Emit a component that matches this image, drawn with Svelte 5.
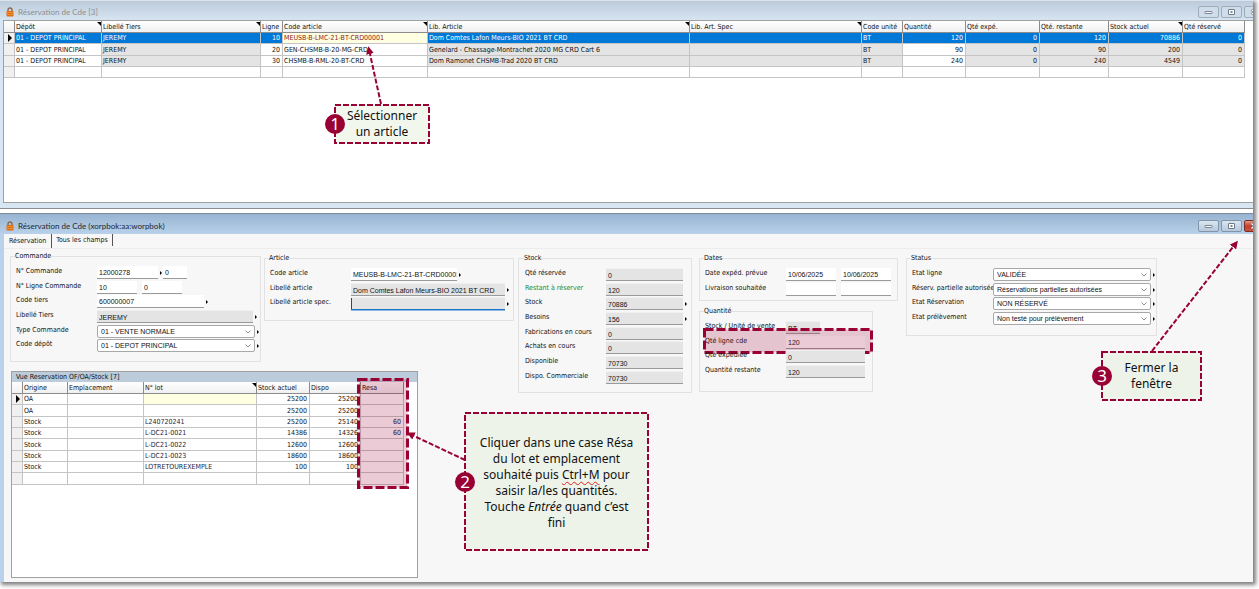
<script>
  const colonnesCde = [
    { nom: 'Dépôt', cle: 'depot', largeur: 87, tri: true },
    { nom: 'Libellé Tiers', cle: 'tiers', largeur: 159, tri: true, gris: true },
    { nom: 'Ligne', cle: 'ligne', largeur: 22, num: true },
    { nom: 'Code article', cle: 'code', largeur: 145, tri: true },
    { nom: 'Lib. Article', cle: 'lib', largeur: 262, tri: true, gris: true },
    { nom: 'Lib. Art. Spec', cle: 'spec', tri: true, gris: true },
    { nom: 'Code unité', cle: 'unite', largeur: 41, gris: true },
    { nom: 'Quantité', cle: 'quantite', largeur: 63, num: true },
    { nom: 'Qté expé.', cle: 'expe', largeur: 74, num: true, gris: true },
    { nom: 'Qté. restante', cle: 'restante', largeur: 69, num: true, gris: true },
    { nom: 'Stock actuel', cle: 'stock', largeur: 74, num: true, tri: true, gris: true },
    { nom: 'Qté réservé', cle: 'reserve', largeur: 62, num: true, gris: true }
  ];

  const lignesCde = [
    { depot: '01 - DEPOT PRINCIPAL', tiers: 'JEREMY', ligne: 10, code: 'MEUSB-B-LMC-21-BT-CRD00001', lib: 'Dom Comtes Lafon Meurs-BIO 2021 BT CRD', unite: 'BT', quantite: 120, expe: 0, restante: 120, stock: 70886, reserve: 0 },
    { depot: '01 - DEPOT PRINCIPAL', tiers: 'JEREMY', ligne: 20, code: 'GEN-CHSMB-B-20-MG-CRD', lib: 'Genelard - Chassage-Montrachet 2020 MG CRD Cart 6', unite: 'BT', quantite: 90, expe: 0, restante: 90, stock: 200, reserve: 0 },
    { depot: '01 - DEPOT PRINCIPAL', tiers: 'JEREMY', ligne: 30, code: 'CHSMB-B-RML-20-BT-CRD', lib: 'Dom Ramonet CHSMB-Trad 2020 BT CRD', unite: 'BT', quantite: 240, expe: 0, restante: 240, stock: 4549, reserve: 0 }
  ];

  const colonnesLot = [
    { nom: 'Origine', cle: 'origine', largeur: 45 },
    { nom: 'Emplacement', cle: 'emplacement', largeur: 76 },
    { nom: 'N° lot', cle: 'lot', largeur: 113, tri: true },
    { nom: 'Stock actuel', cle: 'stock', largeur: 53, num: true },
    { nom: 'Dispo', cle: 'dispo', largeur: 51, num: true },
    { nom: 'Resa', cle: 'resa', largeur: 43, num: true }
  ];

  const lignesLot = [
    { origine: 'OA', stock: 25200, dispo: 25200 },
    { origine: 'OA', stock: 25200, dispo: 25200 },
    { origine: 'Stock', lot: 'L240720241', stock: 25200, dispo: 25140, resa: 60 },
    { origine: 'Stock', lot: 'L-DC21-0021', stock: 14386, dispo: 14326, resa: 60 },
    { origine: 'Stock', lot: 'L-DC21-0022', stock: 12600, dispo: 12600 },
    { origine: 'Stock', lot: 'L-DC21-0023', stock: 18600, dispo: 18600 },
    { origine: 'Stock', lot: 'LOTRETOUREXEMPLE', stock: 100, dispo: 100 }
  ];

  const commande = [
    { nom: 'N° Commande', champs: [{ v: '12000278', l: 61, fleche: true }, { v: '0', l: 24 }] },
    { nom: 'N° Ligne Commande', champs: [{ v: '10', l: 40 }, { v: '0', l: 40 }] },
    { nom: 'Code tiers', champs: [{ v: '600000007', l: 107, fleche: true }] },
    { nom: 'Libellé Tiers', champs: [{ v: 'JEREMY', l: 156, gris: true, fleche: true }] },
    { nom: 'Type Commande', champs: [{ v: '01 - VENTE NORMALE', l: 158, liste: true, fleche: true }] },
    { nom: 'Code dépôt', champs: [{ v: '01 - DEPOT PRINCIPAL', l: 158, liste: true, fleche: true }] }
  ];

  const article = [
    { nom: 'Code article', champs: [{ v: 'MEUSB-B-LMC-21-BT-CRD00001', l: 106, fleche: true }] },
    { nom: 'Libellé article', champs: [{ v: 'Dom Comtes Lafon Meurs-BIO 2021 BT CRD', l: 154, gris: true, fleche: true }] },
    { nom: 'Libellé article spec.', champs: [{ v: '', l: 154, gris: true, actif: true, fleche: true }] }
  ];

  const stock = [
    { nom: 'Qté réservée', champs: [{ v: '0', l: 77, gris: true }] },
    { nom: 'Restant à réserver', vert: true, champs: [{ v: '120', l: 77, gris: true }] },
    { nom: 'Stock', champs: [{ v: '70886', l: 77, gris: true, fleche: true }] },
    { nom: 'Besoins', champs: [{ v: '156', l: 77, gris: true, fleche: true }] },
    { nom: 'Fabrications en cours', champs: [{ v: '0', l: 77, gris: true }] },
    { nom: 'Achats en cours', champs: [{ v: '0', l: 77, gris: true }] },
    { nom: 'Disponible', champs: [{ v: '70730', l: 77, gris: true }] },
    { nom: 'Dispo. Commerciale', champs: [{ v: '70730', l: 77, gris: true }] }
  ];

  const dates = [
    { nom: 'Date expéd. prévue', champs: [{ v: '10/06/2025', l: 50 }, { v: '10/06/2025', l: 50 }] },
    { nom: 'Livraison souhaitée', champs: [{ v: '', l: 50 }, { v: '', l: 50 }] }
  ];

  const quantite = [
    { nom: 'Stock / Unité de vente', champs: [{ v: 'BT', l: 34, gris: true }] },
    { nom: 'Qté ligne cde', cadre: true, champs: [{ v: '120', l: 79 }] },
    { nom: 'Qté expédiée', champs: [{ v: '0', l: 79, gris: true }] },
    { nom: 'Quantité restante', champs: [{ v: '120', l: 79, gris: true }] }
  ];

  const status = [
    { nom: 'Etat ligne', champs: [{ v: 'VALIDÉE', l: 158, liste: true, fleche: true }] },
    { nom: 'Réserv. partielle autorisée', champs: [{ v: 'Réservations partielles autorisées', l: 158, liste: true, fleche: true }] },
    { nom: 'Etat Réservation', champs: [{ v: 'NON RÉSERVÉ', l: 158, liste: true, fleche: true }] },
    { nom: 'Etat prélèvement', champs: [{ v: 'Non testé pour prélèvement', l: 158, liste: true, fleche: true }] }
  ];
</script>

{#snippet cadenas()}
  <svg class="cadenas" viewBox="0 0 8 10" aria-hidden="true">
    <path d="M2 5V3a2 2 0 0 1 4 0v2" fill="none" stroke="#8a6a4a" stroke-width="1.4" />
    <rect x="0.5" y="4" width="7" height="5.5" rx="0.8" fill="#e06c12" />
    <path d="M1 5.5h6M1 7.5h6" stroke="#f9a94f" stroke-width="0.6" />
  </svg>
{/snippet}

{#snippet boutons()}
  <div class="boutons">
    <button type="button" aria-label="Réduire">
      <svg viewBox="0 0 19 10"><rect x="6" y="4.5" width="7" height="2" rx="0.5" fill="#fff" stroke="#5f6b78" stroke-width="0.8" /></svg>
    </button>
    <button type="button" aria-label="Agrandir">
      <svg viewBox="0 0 19 10"><rect x="6.5" y="2.5" width="6" height="5" rx="0.5" fill="#fff" stroke="#5f6b78" stroke-width="0.9" /><rect x="8.5" y="4.2" width="2" height="1.6" fill="#5f6b78" /></svg>
    </button>
    <button type="button" class="fermer" aria-label="Fermer">
      <svg viewBox="0 0 19 10"><path d="M6.5 2.5l5 5M11.5 2.5l-5 5" stroke="#5f6b78" stroke-width="2.4" /><path d="M6.5 2.5l5 5M11.5 2.5l-5 5" stroke="#fff" stroke-width="1.2" /></svg>
    </button>
  </div>
{/snippet}

{#snippet groupe(titre, lignes, classe)}
  <fieldset class="groupe {classe}">
    <legend>{titre}</legend>
    {#each lignes as ligne, i}
      <div class="ligne">
        <label for="{classe}-{i}-0" class:vert={ligne.vert}>{ligne.nom}</label>
        <div class="champs">
          {#each ligne.champs as champ, j}
            <span class="champ" class:fleche={champ.fleche} class:liste={champ.liste} style:width="{champ.l}px">
              {#if champ.liste}
                <select id="{classe}-{i}-{j}">
                  <option>{champ.v}</option>
                </select>
                <svg class="chevron" viewBox="0 0 6 4" aria-hidden="true"><path d="M0.5 0.5L3 3L5.5 0.5" fill="none" stroke="#777" stroke-width="0.8" /></svg>
              {:else}
                <input
                  id="{classe}-{i}-{j}"
                  type="text"
                  value={champ.v}
                  aria-label={j > 0 ? ligne.nom : undefined}
                  class:gris={champ.gris}
                  class:actif={champ.actif}
                />
              {/if}
            </span>
          {/each}
        </div>
        {#if ligne.cadre}
          <svg class="cadre cadre-qte" aria-hidden="true"><rect x="1.5" y="1.5" /></svg>
        {/if}
      </div>
    {/each}
  </fieldset>
{/snippet}

{#snippet grille(colonnes, lignes, classe)}
  <table class="grille {classe}">
    <colgroup>
      <col style:width="11px" />
      {#each colonnes as col}
        <col style:width={col.largeur ? col.largeur + 'px' : 'auto'} />
      {/each}
    </colgroup>
    <thead>
      <tr>
        <th></th>
        {#each colonnes as col}
          <th class:tri={col.tri}>{col.nom}</th>
        {/each}
      </tr>
    </thead>
    <tbody>
      {#each lignes as ligne, i}
        <tr class:courante={i === 0}>
          <td class="selecteur"></td>
          {#each colonnes as col}
            <td class:num={col.num} class:gris={col.gris} class="c-{col.cle}">{ligne[col.cle] ?? ''}</td>
          {/each}
        </tr>
      {/each}
      <tr>
        <td class="selecteur"></td>
        {#each colonnes as col}
          <td></td>
        {/each}
      </tr>
    </tbody>
  </table>
{/snippet}

<main class="ecran">
  <section class="fenetre inactive">
    <header class="titre">
      {@render cadenas()}
      <h1>Réservation de Cde [3]</h1>
      {@render boutons()}
    </header>
    <div class="zone-grille">
      {@render grille(colonnesCde, lignesCde, 'cde')}
    </div>
  </section>

  <div class="separateur"></div>

  <section class="fenetre active">
    <header class="titre">
      {@render cadenas()}
      <h1>Réservation de Cde (xorpbok:aa:worpbok)</h1>
      {@render boutons()}
    </header>
    <div class="contenu">
      <nav class="onglets">
        <button type="button">Réservation</button>
        <button type="button" class="second">Tous les champs</button>
      </nav>
      <div class="formulaire">
        <div class="gauche">
          <div class="rangee">
            {@render groupe('Commande', commande, 'commande')}
            {@render groupe('Article', article, 'article')}
          </div>
          <div class="vue">
            <h2>Vue Reservation OF/OA/Stock [7]</h2>
            {@render grille(colonnesLot, lignesLot, 'lots')}
            <svg class="cadre cadre-resa" aria-hidden="true"><rect x="1.5" y="1.5" /></svg>
          </div>
        </div>
        {@render groupe('Stock', stock, 'stock')}
        <div class="pile">
          {@render groupe('Dates', dates, 'dates')}
          {@render groupe('Quantité', quantite, 'quantite')}
        </div>
        {@render groupe('Status', status, 'status')}
      </div>
    </div>
  </section>

  <aside class="bulle bulle1">
    <svg class="contour" aria-hidden="true">
      <defs>
        <marker id="pointe" viewBox="0 0 8 8" refX="0" refY="4" markerWidth="8" markerHeight="8" markerUnits="userSpaceOnUse" orient="auto">
          <path d="M0 0L8 4L0 8z" fill="#990033" />
        </marker>
      </defs>
      <rect x="1" y="1" />
      <line x1="47" y1="0" x2="36" y2="-50" marker-end="url(#pointe)" />
    </svg>
    <span class="numero">1</span>
    <p>Sélectionner<br />un article</p>
  </aside>

  <aside class="bulle bulle2">
    <svg class="contour" aria-hidden="true">
      <rect x="1" y="1" />
      <line x1="1" y1="48" x2="-50" y2="24" marker-end="url(#pointe)" />
    </svg>
    <span class="numero">2</span>
    <p>
      Cliquer dans une case Résa<br />du lot et emplacement<br />souhaité puis <span class="faute">Ctrl+M</span> pour<br />saisir la/les quantités.<br />Touche <em>Entrée</em> quand c’est<br />fini
    </p>
  </aside>

  <aside class="bulle bulle3">
    <svg class="contour" aria-hidden="true">
      <rect x="1" y="1" />
      <line x1="51" y1="0" x2="132" y2="-104" marker-end="url(#pointe)" />
    </svg>
    <span class="numero">3</span>
    <p>Fermer la<br />fenêtre</p>
  </aside>
</main>

<style>
:global(body) {
  margin: 0;
  min-height: 100vh;
  background: #fff;
}
.ecran, .ecran * {
  box-sizing: border-box;
}
.ecran {
  position: relative;
  display: flex;
  flex-direction: column;
  min-height: calc(100vh - 7px);
  margin-right: 6px;
  background: #fff;
  box-shadow: 2px 2px 4px 1px rgba(0, 0, 0, 0.5);
  font-family: "DejaVu Sans Condensed", "DejaVu Sans", Tahoma, sans-serif;
  font-size: 7px;
  line-height: 10px;
  color: #111;
}
.fenetre {
  display: flex;
  flex-direction: column;
}
.titre {
  display: flex;
  align-items: center;
  padding-left: 6px;
  overflow: hidden;
}
.titre h1 {
  flex: 1;
  margin: 0;
  font-family: Lato, "Open Sans", sans-serif;
  font-size: 8px;
  font-weight: 400;
}
.cadenas {
  width: 8px;
  height: 10px;
  margin-right: 4px;
}
.inactive {
  background: #d8e6f4;
  padding-bottom: 5px;
  border-bottom: 1px solid #8c8c8c;
}
.inactive .titre {
  height: 20px;
  padding-top: 3px;
  border-top: 1px solid #dbe4ee;
  background: linear-gradient(#bccbda, #d7e4f2);
}
.inactive h1 {
  color: #8e8e8e;
}
.zone-grille {
  min-height: 183px;
  margin-left: 3px;
  padding-right: 8px;
  background: #fff;
  border: 1px solid #a0a0a0;
  border-width: 1px 0 1px 1px;
}
.separateur {
  height: 4px;
  background: #fff;
}
.active {
  flex: 1;
  background: #b9d1ea;
  border-top: 1px solid #7c8a99;
}
.active .titre {
  height: 20px;
  padding-top: 3px;
  background: linear-gradient(#98b4d2, #b9d1ea);
}
.active h1 {
  color: #1c2733;
}
.boutons {
  display: flex;
  gap: 2px;
  margin-right: -12px;
}
.boutons button {
  width: 21px;
  height: 12px;
  padding: 0;
  border: 1px solid #8294a8;
  border-radius: 2px;
  background: linear-gradient(#dbe6f1, #b6c8dc);
}
.inactive .boutons button {
  border-color: #9eacba;
  background: #cfdcea;
}
.boutons svg {
  display: block;
  width: 19px;
  height: 10px;
}
.active .boutons .fermer {
  border-color: #7d2c22;
  background: linear-gradient(#e09a8a, #c4402c 50%, #c9533f);
}

.grille {
  width: 100%;
  table-layout: fixed;
  border-collapse: separate;
  border-spacing: 0;
}
.grille th {
  position: relative;
  height: 12px;
  padding: 0 0 0 1px;
  line-height: 10px;
  font-weight: 400;
  text-align: left;
  white-space: nowrap;
  background: linear-gradient(#fff, #f0f0f0);
  border-right: 1px solid #8c8c8c;
  border-bottom: 1px solid #8c8c8c;
}
.grille th.tri::after {
  content: "";
  position: absolute;
  top: 1px;
  right: 0;
  border-top: 4px solid #000;
  border-left: 4px solid transparent;
}
.grille td {
  height: 11px;
  padding: 0 2px 0 1px;
  line-height: 10px;
  white-space: nowrap;
  overflow: hidden;
  border-right: 1px solid #c4c4c4;
  border-bottom: 1px solid #c4c4c4;
}
.grille tbody tr:nth-child(3n + 2) td {
  height: 12px;
}
.grille td.num {
  text-align: right;
}
.grille td.gris {
  background: #e4e4e4;
}
.grille td.selecteur {
  position: relative;
  background: #f0f0f0;
}
.courante .selecteur::after {
  content: "";
  position: absolute;
  top: 1px;
  left: 4px;
  border-left: 4px solid #000;
  border-top: 4px solid transparent;
  border-bottom: 4px solid transparent;
}
.cde .courante td:not(.selecteur) {
  background: #0078d7;
  color: #fff;
}
.cde .courante td.c-code {
  background: #ffffe1;
  color: #8b1a1a;
}
.lots .courante td.c-lot {
  background: #ffffe1;
}
.lots .c-lot {
  color: #1d1d3c;
}

.contenu {
  flex: 1;
  display: flex;
  flex-direction: column;
  margin-left: 4px;
  background: #f7f7f7;
}
.onglets {
  display: flex;
  height: 15px;
  border-bottom: 1px solid #ececec;
}
.onglets button {
  height: 14px;
  padding: 0 5px;
  border: 0;
  border-right: 1px solid #555;
  background: none;
  font: inherit;
  color: inherit;
}
.onglets .second {
  height: 12px;
  padding: 0 4px;
}
.formulaire {
  flex: 1;
  display: flex;
  align-items: flex-start;
  padding: 2px 0 4px 6px;
}
.gauche {
  align-self: stretch;
  display: flex;
  flex-direction: column;
  margin-right: 4px;
}
.rangee {
  display: flex;
  align-items: flex-start;
  gap: 3px;
}
.groupe {
  flex: none;
  min-width: 0;
  margin: 2px 0 0;
  padding: 5px 0 7px 5px;
  border: 1px solid #e2e2e2;
}
.groupe legend {
  margin-left: -1px;
  padding: 0;
  line-height: 10px;
}
.commande {
  width: 251px;
  margin-top: 0;
}
.article {
  width: 250px;
  padding-bottom: 8px;
}
.stock {
  width: 174px;
  margin-right: 7px;
  padding-left: 6px;
}
.pile {
  display: flex;
  flex-direction: column;
  gap: 3px;
  margin-right: 8px;
}
.dates {
  width: 199px;
  padding-bottom: 3px;
}
.quantite {
  width: 174px;
  padding-bottom: 11px;
}
.status {
  width: 251px;
  padding-bottom: 8px;
}
.ligne {
  position: relative;
  display: flex;
  align-items: flex-start;
  height: 15px;
}
.ligne:nth-of-type(3n + 2) {
  height: 14px;
}
.ligne label {
  flex: none;
  width: 81px;
  line-height: 10px;
  white-space: nowrap;
  overflow: hidden;
}
.ligne label.vert {
  color: #1d8a1d;
}
.champs {
  display: flex;
  gap: 5px;
}
.champ {
  position: relative;
  display: block;
}
.fleche::after {
  content: "";
  position: absolute;
  top: 5px;
  right: -4px;
  border-left: 2px solid #000;
  border-top: 2px solid transparent;
  border-bottom: 2px solid transparent;
}
.champ input, .champ select {
  display: block;
  width: 100%;
  height: 13px;
  margin: 0;
  padding: 1px 0 0 2px;
  border: 0;
  border-bottom: 1px solid #9a9a9a;
  border-radius: 0;
  outline: none;
  background: #fff;
  font-family: "Liberation Sans", Arial, sans-serif;
  font-size: 7px;
  color: #111;
}
.champ input.gris {
  background: #e4e4e4;
  border-top: 1px solid #f0f0f0;
}
.champ input.actif {
  border-bottom: 1px solid #1a73c9;
  box-shadow: inset 1px 0 0 #444, 0 1px 0 #8fbbe6;
}
.champ select {
  appearance: none;
  padding: 0 10px 0 3px;
  line-height: 11px;
  border: 1px solid #a8a8a8;
  border-radius: 2px;
}
.chevron {
  position: absolute;
  top: 5px;
  right: 4px;
  width: 6px;
  height: 4px;
  pointer-events: none;
}
.vue {
  position: relative;
  flex: 1;
  width: 407px;
  margin: 9px 0 0 1px;
  background: #fff;
  border: 1px solid #a0a0a0;
}
.vue h2 {
  margin: 0;
  padding-left: 4px;
  font-size: 7px;
  font-weight: 400;
  line-height: 10px;
  background: #bdccdb;
}
.vue .grille {
  width: 392px;
}

.cadre {
  position: absolute;
  overflow: visible;
}
.cadre rect {
  width: calc(100% - 3px);
  height: calc(100% - 3px);
  fill: rgba(153, 0, 51, 0.2);
  stroke: #990033;
  stroke-width: 3;
  stroke-dasharray: 9 3;
}
.cadre-qte {
  top: -8px;
  left: -2px;
  width: 170px;
  height: 26px;
}
.cadre-resa {
  top: 6px;
  left: 345px;
  width: 52px;
  height: 111px;
}

.bulle {
  position: absolute;
  display: flex;
  align-items: center;
  justify-content: center;
  background: #edf3e9;
  font-family: "Noto Sans", "Open Sans", sans-serif;
  font-size: 12px;
  line-height: 16px;
  text-align: center;
  color: #111;
}
.bulle p {
  position: relative;
  margin: 0;
  white-space: nowrap;
}
.bulle1 {
  top: 104px;
  left: 334px;
  width: 96px;
  height: 40px;
  background: #f2f7ee;
}
.bulle2 {
  top: 412px;
  left: 464px;
  width: 185px;
  height: 139px;
  padding-top: 2px;
}
.bulle3 {
  top: 351px;
  right: 51px;
  width: 101px;
  height: 50px;
}
.contour {
  position: absolute;
  top: 0;
  left: 0;
  width: 100%;
  height: 100%;
  overflow: visible;
}
.contour rect {
  width: calc(100% - 2px);
  height: calc(100% - 2px);
  fill: none;
  stroke: #990033;
  stroke-width: 2;
  stroke-dasharray: 6 2;
}
.contour line {
  stroke: #990033;
  stroke-width: 2;
  stroke-dasharray: 5 2;
}
.numero {
  position: absolute;
  top: 50%;
  left: -9px;
  width: 20px;
  height: 20px;
  margin-top: -10px;
  border-radius: 50%;
  background: #990033;
  color: #fff;
  font-size: 17px;
  line-height: 20px;
}
.faute {
  text-decoration: underline wavy #e02020 1px;
  text-underline-offset: 2px;
}
</style>
